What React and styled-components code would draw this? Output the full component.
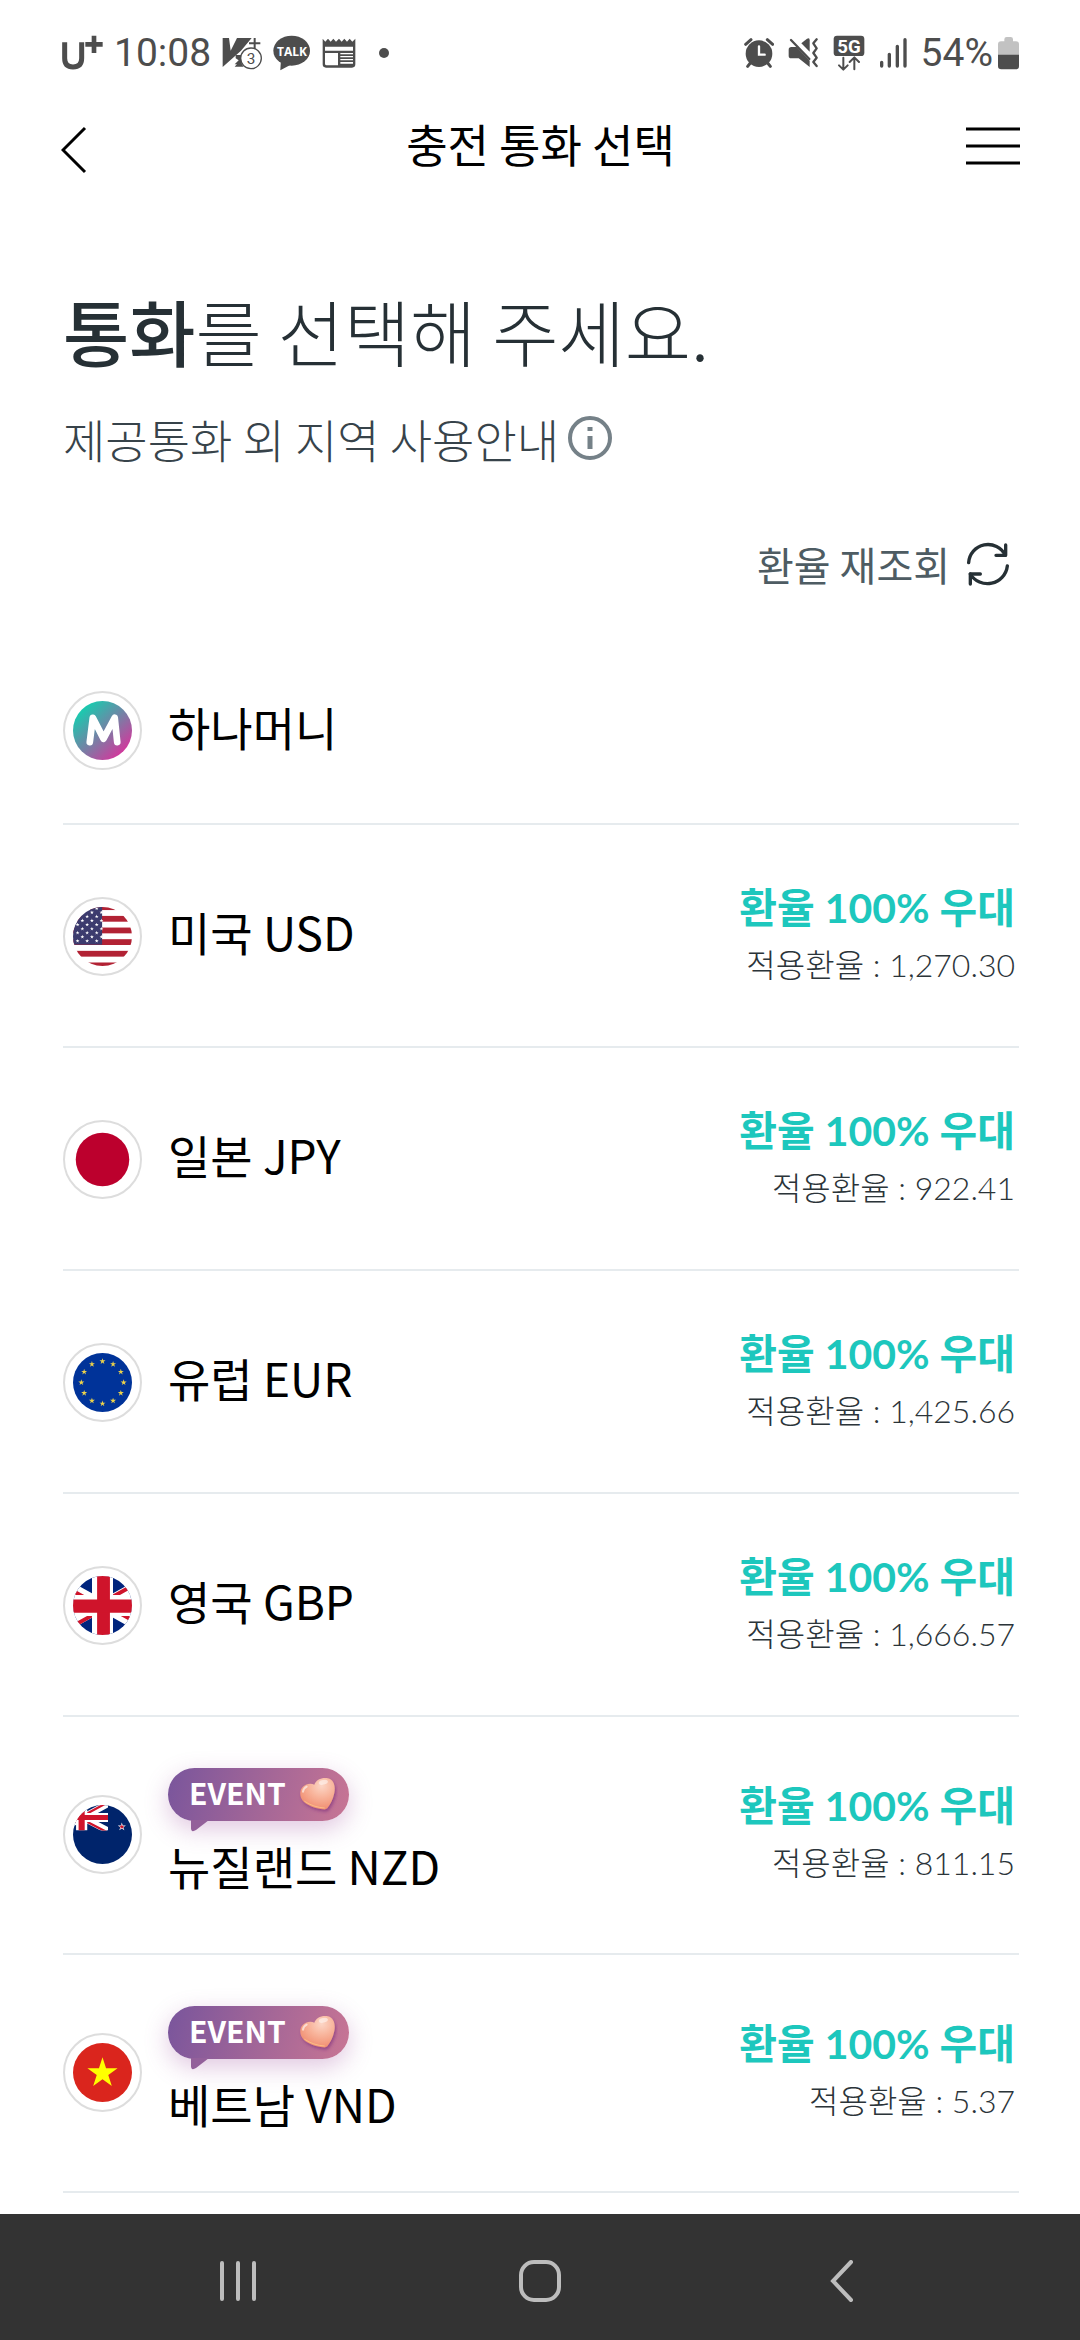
import React from "react";
import styled, { createGlobalStyle } from "styled-components";

const GlobalStyle = createGlobalStyle`
  *, *::before, *::after { box-sizing: border-box; }
  body {
    margin: 0;
    background: #fff;
    color: #000;
    font-family: "Noto Sans CJK KR", sans-serif;
  }
  button { font: inherit; color: inherit; background: none; border: 0; padding: 0; cursor: pointer; }
  h1, h2, p, ul { margin: 0; padding: 0; }
  ul { list-style: none; }
  svg { display: block; flex: none; }
`;

const Screen = styled.div`
  display: flex;
  flex-direction: column;
  min-height: 100vh;
`;

/* ---------- status bar ---------- */

const StatusBar = styled.div`
  display: flex;
  justify-content: space-between;
  align-items: center;
  padding: 29px 61px 27px 62px;
  color: #4d4d4d;
  font: 400 39px/48px Roboto, sans-serif;
`;

const StatusGroup = styled.div`
  display: flex;
  align-items: center;
  gap: ${(p) => p.$gap}px;
`;

const DotSpace = styled.span`
  padding-left: 12px;
`;

const Charge = styled.span`
  display: flex;
  align-items: center;
  gap: 5px;
`;

/* ---------- header ---------- */

const Header = styled.header`
  display: grid;
  grid-template-columns: 56px 1fr 56px;
  align-items: start;
  padding: 8px 60px 0 61px;
`;

const HeaderButton = styled.button`
  display: flex;
  align-items: center;
  height: ${(p) => p.$height}px;
`;

const PageTitle = styled.h1`
  font-size: 45px;
  line-height: 64px;
  font-weight: 400;
  text-align: center;
`;

/* ---------- body ---------- */

const Main = styled.main`
  flex: 1;
  padding: 97px 61px 20px 63px;
`;

const Heading = styled.h2`
  font-size: 72px;
  line-height: 90px;
  font-weight: 300;
  color: #263035;
  strong { font-weight: 500; }
`;

const Guide = styled.div`
  display: flex;
  align-items: center;
  gap: 8px;
  margin-top: 33px;
  font-size: 46px;
  line-height: 60px;
  font-weight: 300;
  color: #37434a;
`;

const RefreshRow = styled.div`
  display: flex;
  justify-content: flex-end;
  padding: 66px 9px 43px 0;
`;

const RefreshButton = styled.button`
  display: flex;
  align-items: center;
  gap: 16px;
  font-size: 40px;
  line-height: 60px;
  color: #4e5c63;
`;

const Row = styled.li`
  border-bottom: 2px solid #e6ebee;
`;

const RowButton = styled.button`
  display: flex;
  align-items: center;
  width: 100%;
  padding: ${(p) => (p.$event ? 51 : 54)}px 4px 53px 0;
  text-align: left;
`;

const FlagRing = styled.span`
  display: flex;
  align-items: center;
  justify-content: center;
  flex: none;
  width: 79px;
  height: 79px;
  margin-right: 26px;
  border: 2px solid #ddd;
  border-radius: 50%;
`;

const NameBlock = styled.span`
  display: flex;
  flex-direction: column;
  align-items: flex-start;
  gap: 19px;
  flex: 1;
`;

const Name = styled.span`
  padding-bottom: 10px;
  font-size: 46px;
  line-height: 50px;
`;

const Badge = styled.span`
  position: relative;
  display: flex;
  align-items: center;
  gap: 12px;
  height: 53px;
  padding: 0 11px 0 21px;
  border-radius: 27px;
  background: linear-gradient(105deg, #79559c 0%, #a56797 55%, #c87594 100%);
  box-shadow: 0 8px 24px rgba(160, 80, 160, 0.32);
  color: #fff;
`;

const BadgeLabel = styled.span`
  padding-bottom: 5px;
  font-size: 30px;
  line-height: 40px;
  font-weight: 700;
`;

const BadgeTail = styled.svg`
  position: absolute;
  left: 23px;
  top: 52px;
`;

const Rates = styled.span`
  display: flex;
  flex-direction: column;
  align-items: flex-end;
  font-family: Lato, "Noto Sans CJK KR", sans-serif;
  line-height: 57px;
`;

const Discount = styled.span`
  font-size: 41px;
  font-weight: 700;
  color: #1dc7bd;
`;

const Applied = styled.span`
  font-size: 32px;
  font-weight: 300;
  color: #2b3439;
`;

/* ---------- system navigation ---------- */

const NavBar = styled.nav`
  display: grid;
  grid-template-columns: repeat(3, 1fr);
  padding: 0 8%;
  background: #333;
`;

const NavButton = styled.button`
  display: flex;
  align-items: center;
  justify-content: center;
  height: 126px;
  padding-top: 8px;
`;

/* ---------- status icons ---------- */

const dark = "#4d4d4d";

const CarrierIcon = () => (
  <svg width="41" height="36" viewBox="64 44 123 108" aria-label="U+">
    <path d="M72 66V114Q72 140 97 140Q123 140 123 114V66" fill="none" stroke={dark} strokeWidth="15" />
    <path d="M160 46V98M134 72H186" stroke={dark} strokeWidth="14" />
  </svg>
);

const V3Icon = () => (
  <svg width="40" height="36" viewBox="547 48 120 108">
    <path d="M549 57H568L573 95L592 57H636L604 95L549 144Z" fill={dark} />
    <path d="M588 108H606V136H585L597 124L588 118Z" fill={dark} />
    <path d="M585 143L600 126L612 143Z" fill={dark} />
    <path d="M645 57V90M628 73H662" stroke={dark} strokeWidth="6" />
    <circle cx="634" cy="118" r="31" fill="#fff" stroke={dark} strokeWidth="4" />
    <text x="634" y="134" textAnchor="middle" fontFamily="Roboto, sans-serif" fontSize="46" fill={dark}>3</text>
  </svg>
);

const TalkIcon = () => (
  <svg width="38" height="36" viewBox="692 46 114 108">
    <ellipse cx="748" cy="93" rx="55" ry="45" fill={dark} />
    <path d="M716 118L714 152L748 134Z" fill={dark} />
    <text x="749" y="108" textAnchor="middle" fontFamily="Open Sans, sans-serif" fontWeight="700" fontSize="36" fill="#fff">TALK</text>
  </svg>
);

const PlannerIcon = () => (
  <svg width="34" height="32" viewBox="839 52 102 96">
    <path d="M841 57L849 66L857 57L865 66L873 57L881 66L890 57L898 66L906 57L914 66L922 57L930 66L939 57V134Q939 144 929 144H851Q841 144 841 134Z" fill={dark} />
    <path d="M848 81H932V93H848ZM848 100H887V137H853Q848 137 848 132ZM894 100H932V104H894ZM894 109H932V113H894ZM894 118H932V122H894ZM894 127H932V132H894Z" fill="#fff" />
  </svg>
);

const DotIcon = () => (
  <svg width="10" height="10" viewBox="0 0 10 10"><circle cx="5" cy="5" r="5" fill={dark} /></svg>
);

const AlarmIcon = () => (
  <svg width="30" height="32" viewBox="127 50 90 96">
    <circle cx="172" cy="100" r="40" fill={dark} />
    <path d="M132 72L148 58M213 72L197 58M146 128L138 138M198 128L206 138" stroke={dark} strokeWidth="9" strokeLinecap="round" />
    <path d="M172 78V103H189" fill="none" stroke="#fff" strokeWidth="7" strokeLinecap="round" />
  </svg>
);

const MuteIcon = () => (
  <svg width="31" height="32" viewBox="262 50 93 96">
    <path d="M264 88Q264 80 272 80H288L327 121V140L294 114H272Q264 114 264 106Z" fill={dark} />
    <path d="M302 69L318 56Q327 50 327 60V94Z" fill={dark} />
    <path d="M271 59L326 116" stroke={dark} strokeWidth="7" strokeLinecap="round" />
    <path d="M348 57L338 69L348 84L338 98L348 112L338 125L348 137" fill="none" stroke={dark} strokeWidth="7" strokeLinecap="round" strokeLinejoin="round" />
  </svg>
);

const FiveGIcon = () => (
  <svg width="32" height="36" viewBox="399 40 96 108">
    <rect x="401" y="42" width="92" height="61" rx="10" fill={dark} />
    <text x="447" y="93" textAnchor="middle" fontFamily="Roboto, sans-serif" fontWeight="700" fontSize="56" fill="#fff">5G</text>
    <path d="M430 108V143M417 131L430 144L443 131M463 143V108M449 121L463 107L477 121" fill="none" stroke={dark} strokeWidth="6" strokeLinecap="round" strokeLinejoin="round" />
  </svg>
);

const SignalIcon = () => (
  <svg width="28" height="32" viewBox="530 50 84 96">
    <path d="M538 126V137M561 102V137M585 78V137M608 58V137" stroke={dark} strokeWidth="10" strokeLinecap="round" />
  </svg>
);

const BatteryIcon = () => (
  <svg width="21" height="34" viewBox="894 46 63 102">
    <path d="M913 56Q913 49 920 49H932Q939 49 939 56V62H948Q957 62 957 71V110H894V71Q894 62 903 62H913Z" fill="#c2c2c2" />
    <path d="M894 102H957V136Q957 146 947 146H904Q894 146 894 136Z" fill={dark} />
  </svg>
);

/* ---------- page icons ---------- */

const BackIcon = () => (
  <svg width="26" height="48" viewBox="0 0 26 48">
    <path d="M24 2L2 24L24 46" fill="none" stroke="#000" strokeWidth="3" />
  </svg>
);

const MenuIcon = () => (
  <svg width="56" height="38" viewBox="0 0 56 38">
    <path d="M2 2H56M2 19H56M2 36H56" stroke="#000" strokeWidth="3" />
  </svg>
);

const InfoIcon = () => (
  <svg width="46" height="46" viewBox="0 0 46 46">
    <circle cx="23" cy="23" r="20" fill="none" stroke="#758188" strokeWidth="4" />
    <path d="M23 21V34M23 12V16" stroke="#758188" strokeWidth="5" />
  </svg>
);

const RefreshIcon = () => (
  <svg width="44" height="44" viewBox="737 72 132 132">
    <g fill="none" stroke="#263035" strokeWidth="10" strokeLinecap="round" strokeLinejoin="round">
      <path d="M745 134A58 58 0 0 1 855 112" />
      <path d="M856 81V112H827" />
      <path d="M861 144A60 60 0 0 1 750 168" />
      <path d="M750 198V168H780" />
    </g>
  </svg>
);

const starPoints = (cx, cy, r, inner = 0.382) =>
  Array.from({ length: 10 }, (_, i) => {
    const a = (Math.PI / 5) * i - Math.PI / 2;
    const d = i % 2 ? r * inner : r;
    return `${(cx + d * Math.cos(a)).toFixed(2)},${(cy + d * Math.sin(a)).toFixed(2)}`;
  }).join(" ");

const Disc = ({ id, children }) => (
  <svg width="59" height="59" viewBox="0 0 58 58" aria-hidden="true">
    <clipPath id={id}><circle cx="29" cy="29" r="29" /></clipPath>
    <g clipPath={`url(#${id})`}>{children}</g>
  </svg>
);

const HanaMoney = () => (
  <Disc id="hana">
    <linearGradient id="hanaFill" x1="0.12" y1="0.1" x2="0.85" y2="0.9">
      <stop offset="0" stopColor="#10d2b0" />
      <stop offset="0.5" stopColor="#6f86a6" />
      <stop offset="1" stopColor="#d6359c" />
    </linearGradient>
    <rect width="58" height="58" fill="url(#hanaFill)" />
    <path d="M16.5 40.5L19.5 16.5L30 37L41 16.5L43.5 40.5" fill="none" stroke="#fff" strokeWidth="6.6" strokeLinecap="round" strokeLinejoin="round" />
  </Disc>
);

const Usa = () => (
  <Disc id="usa">
    <rect width="58" height="58" fill="#fff" />
    {[0, 1, 2, 3, 4, 5].map((i) => (
      <rect key={i} y={-2.7 + i * 11.45} width="58" height="5.7" fill="#b22234" />
    ))}
    <rect width="28.6" height="37" fill="#3c3b6e" />
    {[0, 1, 2, 3, 4, 5, 6, 7, 8].map((r) =>
      [0, 1, 2].map((c) => (
        <polygon key={`${r}-${c}`} points={starPoints(5 + c * 9.4 + (r % 2 ? 4.7 : 0) - 0.5, 33.4 - r * 4, 2)} fill="#fff" />
      ))
    )}
  </Disc>
);

const Japan = () => (
  <Disc id="japan">
    <circle cx="29" cy="29" r="26.3" fill="#bc002d" />
  </Disc>
);

const Europe = () => (
  <Disc id="europe">
    <rect width="58" height="58" fill="#039" />
    {Array.from({ length: 12 }, (_, i) => (
      <polygon
        key={i}
        points={starPoints(29 + 20.8 * Math.sin((Math.PI / 6) * i), 29 - 20.8 * Math.cos((Math.PI / 6) * i), 3.1)}
        fill="#ecd24a"
      />
    ))}
  </Disc>
);

const Britain = () => (
  <Disc id="britain">
    <rect width="58" height="58" fill="#00247d" />
    <path d="M-23 0L81 58M-23 58L81 0" stroke="#fff" strokeWidth="11" />
    <path d="M-23 2L29 31M29 33L-23 62M29 27L81 56M29 26L81 -3" stroke="#cf142b" strokeWidth="3.8" />
    <path d="M29 0V58M0 29H58" stroke="#fff" strokeWidth="20.6" />
    <path d="M30 0V58" stroke="#cf142b" strokeWidth="12.6" />
    <path d="M0 29.6H58" stroke="#cf142b" strokeWidth="13.2" />
  </Disc>
);

const NewZealand = () => (
  <Disc id="nz">
    <rect width="58" height="58" fill="#00246b" />
    <clipPath id="nzCanton"><rect width="34.4" height="25" /></clipPath>
    <g clipPath="url(#nzCanton)">
      <path d="M-18 -2L34 25M-18 27L36 -2" stroke="#fff" strokeWidth="6.5" />
      <path d="M8 13.5L34 27M8 11.5L34 -2.5M8 13L-16 26" stroke="#cf142b" strokeWidth="2.2" />
      <path d="M8.5 0V25" stroke="#fff" strokeWidth="11" />
      <path d="M0 12.3H35" stroke="#fff" strokeWidth="9" />
      <path d="M8.5 0V25" stroke="#cf142b" strokeWidth="6" />
      <path d="M0 12.3H35" stroke="#cf142b" strokeWidth="5" />
    </g>
    <polygon points={starPoints(48, 21.4, 4.2)} fill="#fff" />
    <polygon points={starPoints(48, 21.4, 2.8)} fill="#cf142b" />
  </Disc>
);

const Vietnam = () => (
  <Disc id="vietnam">
    <rect width="58" height="58" fill="#da251d" />
    <polygon points={starPoints(29, 29.6, 15.6)} fill="#ff0" />
  </Disc>
);

const HeartIcon = () => (
  <svg width="40" height="40" viewBox="740 702 120 120" aria-hidden="true">
    <defs>
      <radialGradient id="heartFill" cx="0.62" cy="0.25" r="0.8">
        <stop offset="0" stopColor="#fcd6c6" />
        <stop offset="0.45" stopColor="#f8b49b" />
        <stop offset="1" stopColor="#f08a6c" />
      </radialGradient>
      <filter id="heartShadow" x="-30%" y="-30%" width="160%" height="160%">
        <feDropShadow dx="4" dy="7" stdDeviation="5" floodColor="#7a2f7c" floodOpacity="0.6" />
      </filter>
    </defs>
    <path
      d="M789 731C794 716 812 708 830 712C848 717 853 736 849 756C845 775 838 789 830 799C827 804 822 806 815 805C797 803 775 797 758 783C746 772 743 752 752 740C762 728 778 726 789 731Z"
      fill="url(#heartFill)"
      filter="url(#heartShadow)"
    />
    <path d="M755 752Q756 742 766 737" fill="none" stroke="#fff" strokeOpacity="0.6" strokeWidth="6" strokeLinecap="round" />
    <ellipse cx="816" cy="724" rx="14" ry="7" fill="#fff" fillOpacity="0.5" transform="rotate(-12 816 724)" />
    <path d="M760 781Q786 799 819 801" fill="none" stroke="#ffd98f" strokeOpacity="0.6" strokeWidth="3" strokeLinecap="round" />
  </svg>
);

const EventBadge = () => (
  <Badge>
    <BadgeLabel>EVENT</BadgeLabel>
    <HeartIcon />
    <BadgeTail width="18" height="12" viewBox="0 0 18 12" aria-hidden="true">
      <path d="M0 0H18L5 10Q0 13 0 8Z" fill="#93609a" />
    </BadgeTail>
  </Badge>
);

const currencies = [
  { name: "하나머니", Flag: HanaMoney },
  { name: "미국 USD", Flag: Usa, rate: "1,270.30" },
  { name: "일본 JPY", Flag: Japan, rate: "922.41" },
  { name: "유럽 EUR", Flag: Europe, rate: "1,425.66" },
  { name: "영국 GBP", Flag: Britain, rate: "1,666.57" },
  { name: "뉴질랜드 NZD", Flag: NewZealand, rate: "811.15", event: true },
  { name: "베트남 VND", Flag: Vietnam, rate: "5.37", event: true },
];

export default function App() {
  return (
    <Screen>
      <GlobalStyle />
      <StatusBar>
        <StatusGroup $gap={11}>
          <CarrierIcon />
          <span>10:08</span>
          <V3Icon />
          <TalkIcon />
          <PlannerIcon />
          <DotSpace><DotIcon /></DotSpace>
        </StatusGroup>
        <StatusGroup $gap={14}>
          <AlarmIcon />
          <MuteIcon />
          <FiveGIcon />
          <SignalIcon />
          <Charge>
            54%
            <BatteryIcon />
          </Charge>
        </StatusGroup>
      </StatusBar>

      <Header>
        <HeaderButton $height={76} aria-label="뒤로"><BackIcon /></HeaderButton>
        <PageTitle>충전 통화 선택</PageTitle>
        <HeaderButton $height={68} aria-label="메뉴"><MenuIcon /></HeaderButton>
      </Header>

      <Main>
        <Heading><strong>통화</strong>를 선택해 주세요.</Heading>
        <Guide>
          제공통화 외 지역 사용안내
          <button aria-label="안내"><InfoIcon /></button>
        </Guide>
        <RefreshRow>
          <RefreshButton>
            환율 재조회
            <RefreshIcon />
          </RefreshButton>
        </RefreshRow>
        <ul>
          {currencies.map(({ name, Flag, rate, event }) => (
            <Row key={name}>
              <RowButton $event={event}>
                <FlagRing><Flag /></FlagRing>
                <NameBlock>
                  {event && <EventBadge />}
                  <Name>{name}</Name>
                </NameBlock>
                {rate && (
                  <Rates>
                    <Discount>환율 100% 우대</Discount>
                    <Applied>적용환율 : {rate}</Applied>
                  </Rates>
                )}
              </RowButton>
            </Row>
          ))}
        </ul>
      </Main>

      <NavBar>
        <NavButton aria-label="최근 앱">
          <svg width="38" height="42" viewBox="0 0 38 42">
            <path d="M3 3V39M19 3V39M35 3V39" stroke="#bdbdbd" strokeWidth="4" strokeLinecap="round" />
          </svg>
        </NavButton>
        <NavButton aria-label="홈">
          <svg width="42" height="42" viewBox="0 0 42 42">
            <rect x="2" y="2" width="38" height="38" rx="13" fill="none" stroke="#bdbdbd" strokeWidth="4" />
          </svg>
        </NavButton>
        <NavButton aria-label="뒤로 가기">
          <svg width="24" height="42" viewBox="0 0 24 42">
            <path d="M21 2L3 21L21 40" fill="none" stroke="#bdbdbd" strokeWidth="4" strokeLinecap="round" />
          </svg>
        </NavButton>
      </NavBar>
    </Screen>
  );
}
